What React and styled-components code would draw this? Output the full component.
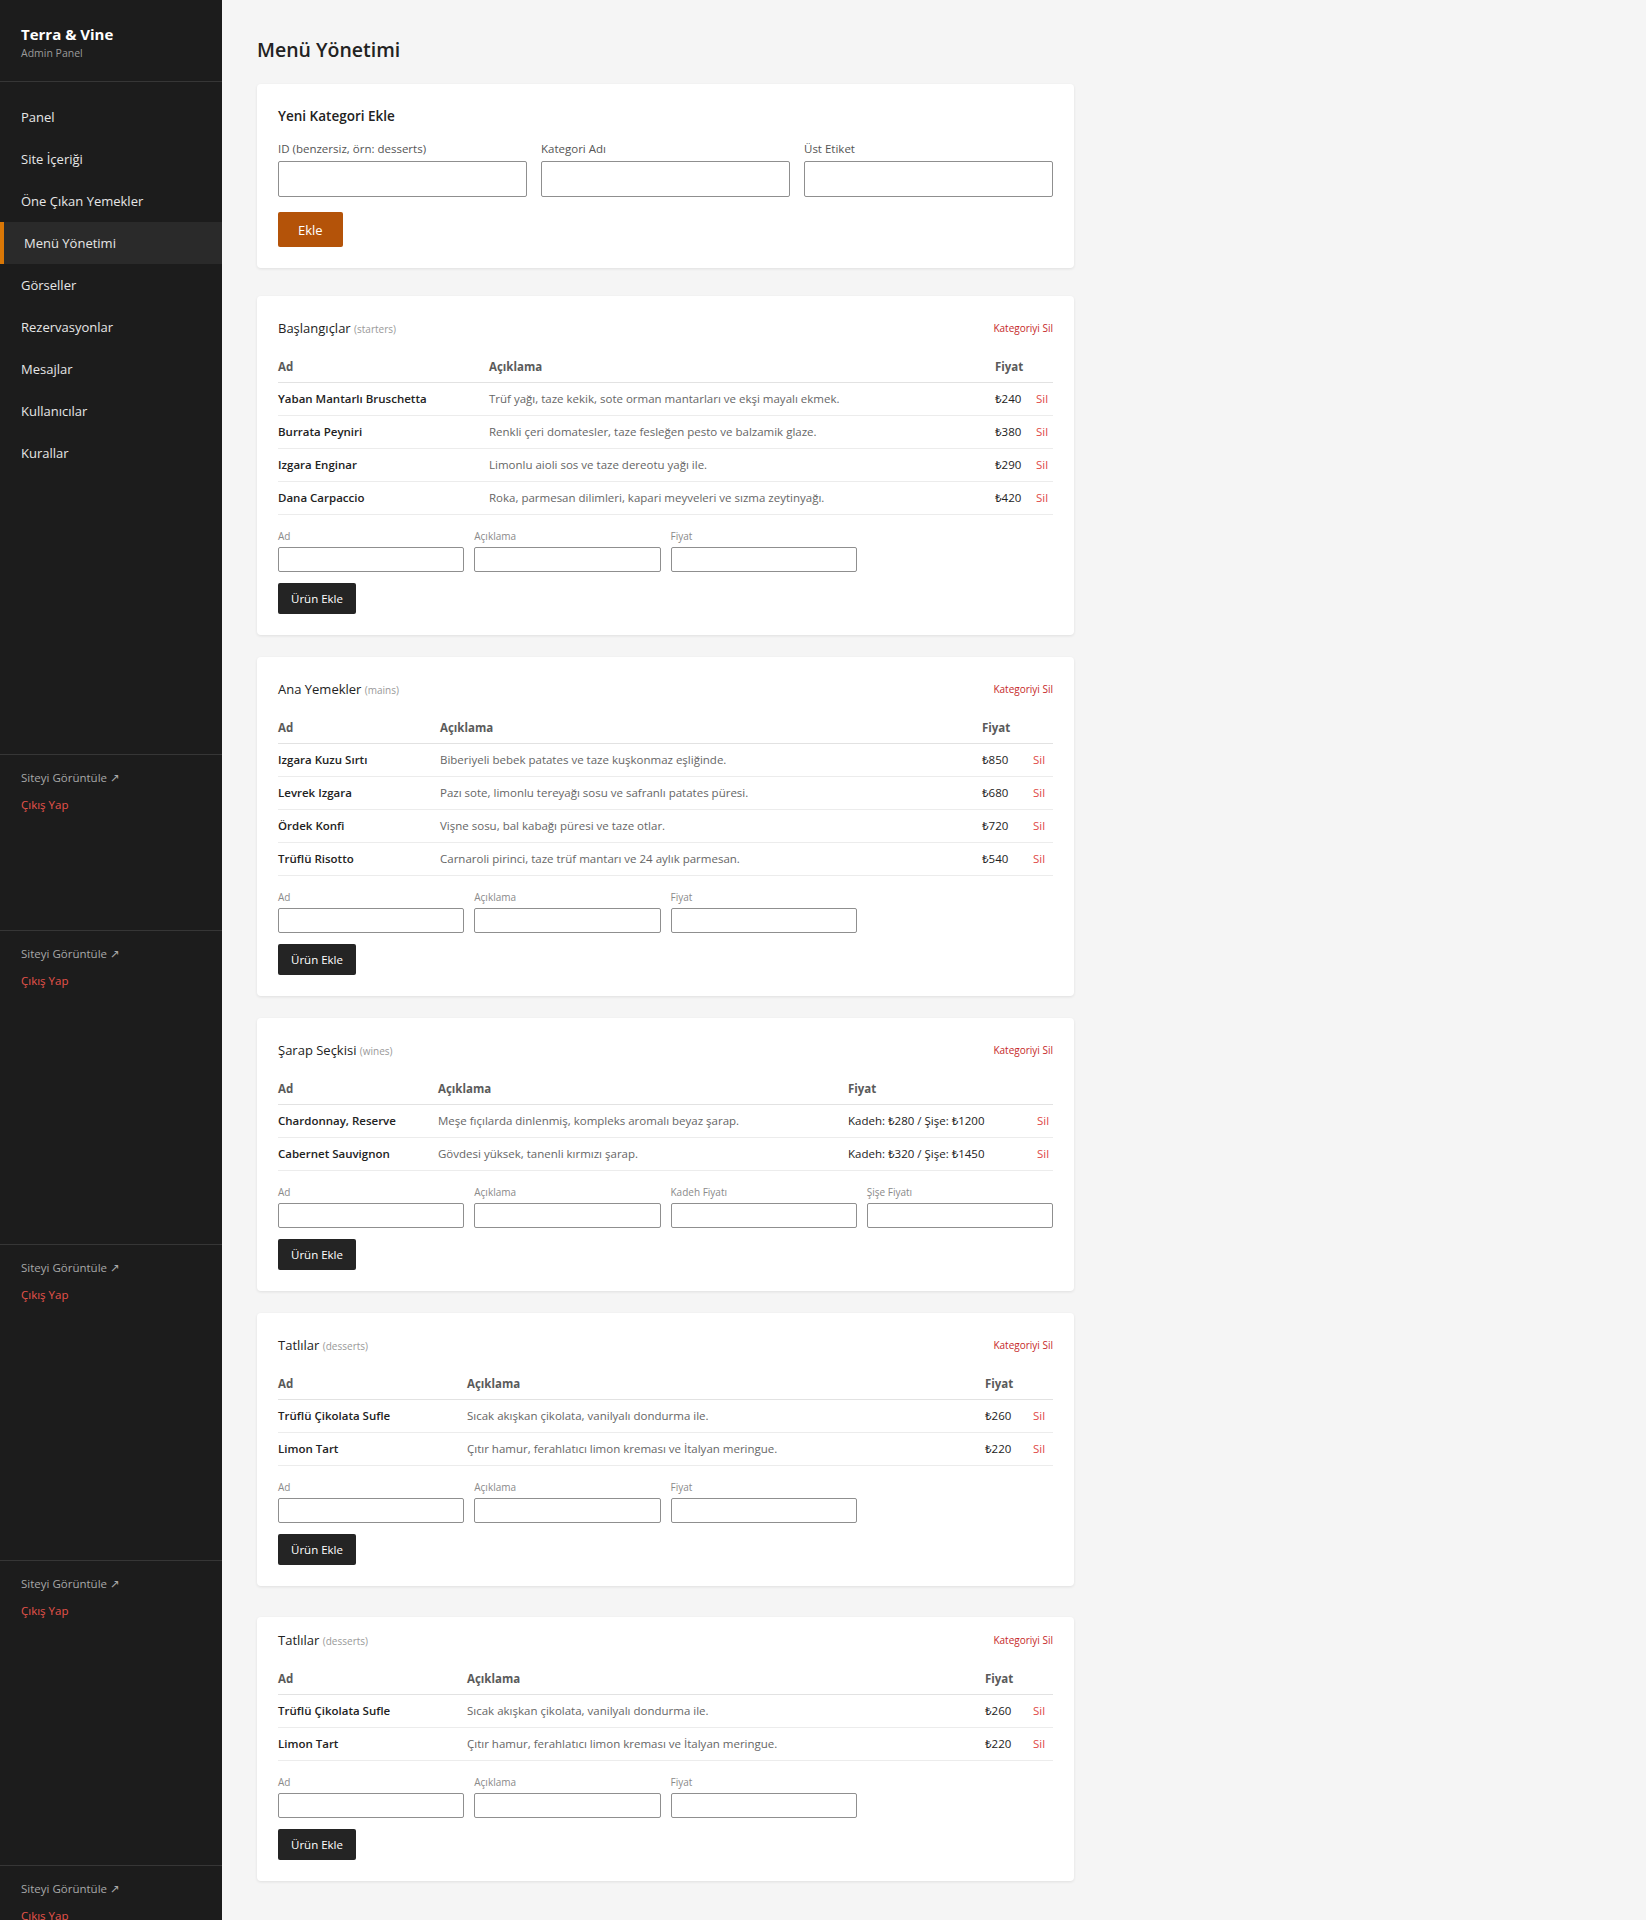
import React from "react";
import styled, { createGlobalStyle } from "styled-components";

const Global = createGlobalStyle`
  html, body { margin: 0; padding: 0; }
  body {
    background: #f5f5f5;
    font-family: "Open Sans", "Noto Sans", "DejaVu Sans", sans-serif;
    color: #222;
  }
  * { box-sizing: border-box; }
`;

const Layout = styled.div`
  display: flex;
  height: 1920px;
  overflow: hidden;
`;

const Sidebar = styled.aside`
  width: 222px;
  flex-shrink: 0;
  background: #1c1c1c;
  display: flex;
  flex-direction: column;
  overflow: hidden;
`;

const Brand = styled.div`
  padding: 23px 21px 21px;
  border-bottom: 1px solid #363636;
`;

const BrandName = styled.div`
  font-size: 15px;
  font-weight: 700;
  line-height: 22px;
  color: #fff;
`;

const BrandSub = styled.div`
  margin-top: 1px;
  font-size: 10.5px;
  line-height: 14px;
  color: #9a9a9a;
`;

const Nav = styled.nav`
  display: flex;
  flex-direction: column;
  padding-top: 14px;
`;

const NavItem = styled.a`
  display: flex;
  align-items: center;
  height: 42px;
  padding-left: ${(p) => (p.$active ? "20px" : "21px")};
  border-left: ${(p) => (p.$active ? "4px solid #d97706" : "0")};
  background: ${(p) => (p.$active ? "#2a2a2a" : "transparent")};
  color: #e6e6e6;
  font-size: 13px;
  text-decoration: none;
`;

const SideFooter = styled.div`
  margin-top: ${(p) => p.$offset}px;
  height: 70px;
  flex-shrink: 0;
  border-top: 1px solid #363636;
  padding: 15px 21px 0;
  display: flex;
  flex-direction: column;
  gap: 11px;
`;

const ViewSite = styled.a`
  font-size: 11.5px;
  line-height: 16px;
  color: #a8a8a8;
  text-decoration: none;
`;

const Logout = styled.a`
  font-size: 11.5px;
  line-height: 16px;
  color: #e5534b;
`;

const Main = styled.main`
  flex: 1;
  padding: 35px 35px 38px;
`;

const PageTitle = styled.h1`
  margin: 0 0 19px;
  font-size: 19.5px;
  font-weight: 600;
  line-height: 30px;
  color: #222;
`;

const Card = styled.section`
  width: 817px;
  margin-top: ${(p) => p.$gap || 0}px;
  padding: ${(p) => p.$padTop ?? 22}px 21px 21px;
  background: #fff;
  border-radius: 4px;
  box-shadow: 0 1px 3px rgba(0, 0, 0, 0.09);
`;

const CardTitle = styled.h2`
  margin: 0;
  font-size: 13.5px;
  font-weight: 600;
  line-height: 20px;
  color: #222;
`;

const FieldGrid = styled.div`
  display: grid;
  grid-template-columns: repeat(${(p) => p.$cols}, minmax(0, 1fr));
  column-gap: ${(p) => p.$gapX}px;
  margin-top: ${(p) => p.$top}px;
`;

const Field = styled.label`
  display: flex;
  flex-direction: column;
  min-width: 0;
`;

const FieldLabel = styled.span`
  font-size: ${(p) => (p.$small ? "10px" : "11.5px")};
  line-height: 14px;
  color: ${(p) => (p.$small ? "#8a8a8a" : "#555")};
  margin-bottom: ${(p) => (p.$small ? 4 : 5)}px;
`;

const Input = styled.input`
  width: 100%;
  height: ${(p) => (p.$tall ? 36 : 25)}px;
  border: 1px solid #8f8f8f;
  border-radius: 2px;
  background: #fff;
  font: inherit;
  padding: 0 8px;
`;

const PrimaryButton = styled.button`
  margin-top: 15px;
  height: 35px;
  padding: 0 20px;
  border: 0;
  border-radius: 2px;
  background: #b45309;
  color: #fff;
  font-family: inherit;
  font-size: 13px;
  cursor: pointer;
`;

const DarkButton = styled.button`
  margin-top: 11px;
  height: 31px;
  padding: 0 13px;
  border: 0;
  border-radius: 2px;
  background: #242424;
  color: #fff;
  font-family: inherit;
  font-size: 11.5px;
  cursor: pointer;
`;

const CatHeader = styled.div`
  display: flex;
  align-items: center;
  justify-content: space-between;
  height: 20px;
`;

const CatTitle = styled.h3`
  margin: 0;
  font-size: 13px;
  font-weight: 500;
  line-height: 20px;
  color: #222;
`;

const CatId = styled.span`
  font-size: 10px;
  font-weight: 400;
  color: #999;
`;

const DeleteCat = styled.a`
  font-size: 10px;
  color: #c62828;
`;

const Table = styled.table`
  width: 100%;
  margin-top: 13px;
  border-collapse: collapse;
  table-layout: fixed;
`;

const Th = styled.th`
  padding: 8px 0;
  text-align: left;
  font-size: 11.5px;
  font-weight: 700;
  line-height: 15px;
  color: #5a5a5a;
  border-bottom: 1px solid #e2e2e2;
  white-space: nowrap;
`;

const Td = styled.td`
  padding: 8px 0;
  font-size: 11.5px;
  line-height: 16px;
  border-bottom: 1px solid #ececec;
  white-space: nowrap;
  color: ${(p) => (p.$muted ? "#666" : p.$danger ? "#e04848" : "#222")};
  font-weight: ${(p) => (p.$bold ? 600 : 400)};
`;

const categories = [
  {
    title: "Başlangıçlar",
    id: "starters",
    gap: 28,
    cols: [211, 506, 41, 17],
    fields: ["Ad", "Açıklama", "Fiyat"],
    items: [
      ["Yaban Mantarlı Bruschetta", "Trüf yağı, taze kekik, sote orman mantarları ve ekşi mayalı ekmek.", "₺240"],
      ["Burrata Peyniri", "Renkli çeri domatesler, taze fesleğen pesto ve balzamik glaze.", "₺380"],
      ["Izgara Enginar", "Limonlu aioli sos ve taze dereotu yağı ile.", "₺290"],
      ["Dana Carpaccio", "Roka, parmesan dilimleri, kapari meyveleri ve sızma zeytinyağı.", "₺420"],
    ],
  },
  {
    title: "Ana Yemekler",
    id: "mains",
    gap: 22,
    cols: [162, 542, 51, 20],
    fields: ["Ad", "Açıklama", "Fiyat"],
    items: [
      ["Izgara Kuzu Sırtı", "Biberiyeli bebek patates ve taze kuşkonmaz eşliğinde.", "₺850"],
      ["Levrek Izgara", "Pazı sote, limonlu tereyağı sosu ve safranlı patates püresi.", "₺680"],
      ["Ördek Konfi", "Vişne sosu, bal kabağı püresi ve taze otlar.", "₺720"],
      ["Trüflü Risotto", "Carnaroli pirinci, taze trüf mantarı ve 24 aylık parmesan.", "₺540"],
    ],
  },
  {
    title: "Şarap Seçkisi",
    id: "wines",
    gap: 22,
    cols: [160, 410, 189, 16],
    fields: ["Ad", "Açıklama", "Kadeh Fiyatı", "Şişe Fiyatı"],
    items: [
      ["Chardonnay, Reserve", "Meşe fıçılarda dinlenmiş, kompleks aromalı beyaz şarap.", "Kadeh: ₺280 / Şişe: ₺1200"],
      ["Cabernet Sauvignon", "Gövdesi yüksek, tanenli kırmızı şarap.", "Kadeh: ₺320 / Şişe: ₺1450"],
    ],
  },
  {
    title: "Tatlılar",
    id: "desserts",
    gap: 22,
    cols: [189, 518, 48, 20],
    fields: ["Ad", "Açıklama", "Fiyat"],
    items: [
      ["Trüflü Çikolata Sufle", "Sıcak akışkan çikolata, vanilyalı dondurma ile.", "₺260"],
      ["Limon Tart", "Çıtır hamur, ferahlatıcı limon kreması ve İtalyan meringue.", "₺220"],
    ],
  },
  {
    title: "Tatlılar",
    id: "desserts",
    gap: 31,
    padTop: 13,
    cols: [189, 518, 48, 20],
    fields: ["Ad", "Açıklama", "Fiyat"],
    items: [
      ["Trüflü Çikolata Sufle", "Sıcak akışkan çikolata, vanilyalı dondurma ile.", "₺260"],
      ["Limon Tart", "Çıtır hamur, ferahlatıcı limon kreması ve İtalyan meringue.", "₺220"],
    ],
  },
];

const navItems = [
  "Panel",
  "Site İçeriği",
  "Öne Çıkan Yemekler",
  "Menü Yönetimi",
  "Görseller",
  "Rezervasyonlar",
  "Mesajlar",
  "Kullanıcılar",
  "Kurallar",
];

const footerOffsets = [280, 106, 244, 246, 235];

function CategoryCard({ cat }) {
  return (
    <Card $gap={cat.gap} $padTop={cat.padTop}>
      <CatHeader>
        <CatTitle>
          {cat.title} <CatId>({cat.id})</CatId>
        </CatTitle>
        <DeleteCat>Kategoriyi Sil</DeleteCat>
      </CatHeader>
      <Table>
        <colgroup>
          {cat.cols.map((w, i) => (
            <col key={i} style={{ width: w }} />
          ))}
        </colgroup>
        <thead>
          <tr>
            <Th>Ad</Th>
            <Th>Açıklama</Th>
            <Th>Fiyat</Th>
            <Th />
          </tr>
        </thead>
        <tbody>
          {cat.items.map((it, i) => (
            <tr key={i}>
              <Td $bold>{it[0]}</Td>
              <Td $muted>{it[1]}</Td>
              <Td>{it[2]}</Td>
              <Td $danger>Sil</Td>
            </tr>
          ))}
        </tbody>
      </Table>
      <FieldGrid $cols={4} $gapX={10} $top={14}>
        {cat.fields.map((f) => (
          <Field key={f}>
            <FieldLabel $small>{f}</FieldLabel>
            <Input />
          </Field>
        ))}
      </FieldGrid>
      <DarkButton>Ürün Ekle</DarkButton>
    </Card>
  );
}

export default function App() {
  return (
    <>
      <Global />
      <Layout>
        <Sidebar>
          <Brand>
            <BrandName>Terra &amp; Vine</BrandName>
            <BrandSub>Admin Panel</BrandSub>
          </Brand>
          <Nav>
            {navItems.map((n) => (
              <NavItem key={n} $active={n === "Menü Yönetimi"}>
                {n}
              </NavItem>
            ))}
          </Nav>
          {footerOffsets.map((o, i) => (
            <SideFooter key={i} $offset={o}>
              <ViewSite>Siteyi Görüntüle ↗</ViewSite>
              <Logout>Çıkış Yap</Logout>
            </SideFooter>
          ))}
        </Sidebar>
        <Main>
          <PageTitle>Menü Yönetimi</PageTitle>
          <Card>
            <CardTitle>Yeni Kategori Ekle</CardTitle>
            <FieldGrid $cols={3} $gapX={14} $top={16}>
              <Field>
                <FieldLabel>ID (benzersiz, örn: desserts)</FieldLabel>
                <Input $tall />
              </Field>
              <Field>
                <FieldLabel>Kategori Adı</FieldLabel>
                <Input $tall />
              </Field>
              <Field>
                <FieldLabel>Üst Etiket</FieldLabel>
                <Input $tall />
              </Field>
            </FieldGrid>
            <PrimaryButton>Ekle</PrimaryButton>
          </Card>
          {categories.map((c, i) => (
            <CategoryCard key={i} cat={c} />
          ))}
        </Main>
      </Layout>
    </>
  );
}
